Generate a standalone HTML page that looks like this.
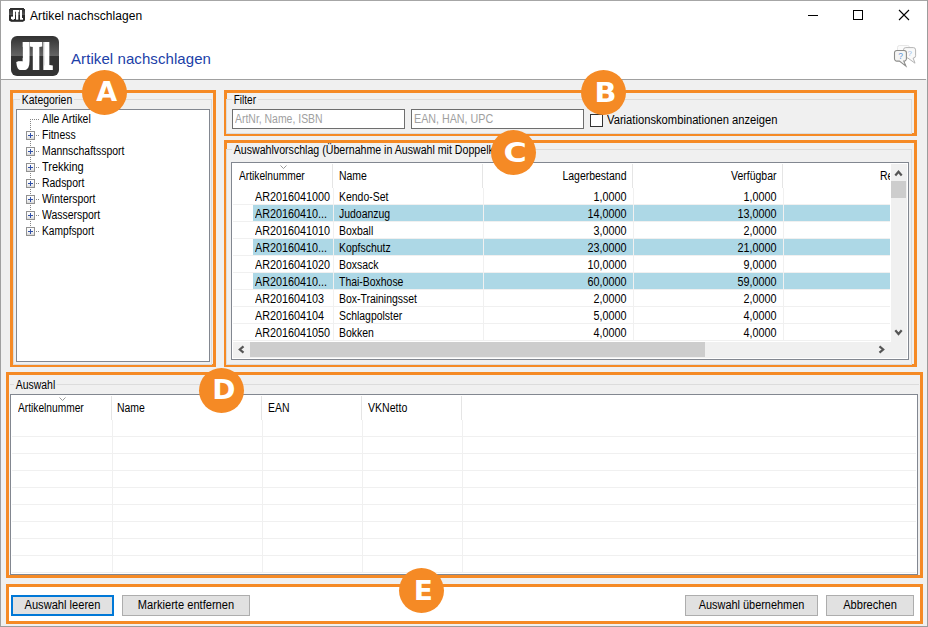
<!DOCTYPE html>
<html><head><meta charset="utf-8"><title>Artikel nachschlagen</title>
<style>
html,body{margin:0;padding:0;}
body{width:928px;height:627px;overflow:hidden;background:#f0f0f0;font-family:"Liberation Sans",sans-serif;font-size:11px;color:#000;}
#win{position:relative;width:928px;height:627px;overflow:hidden;background:#f0f0f0;}
.abs{position:absolute;}
.t{position:absolute;white-space:nowrap;font-size:12px;line-height:14px;transform:scaleX(.87);transform-origin:0 0;}
.ob{position:absolute;border:3px solid #f58a25;box-sizing:border-box;}
.circ{position:absolute;width:45px;height:45px;border-radius:50%;background:#f58a25;color:#fff;font-weight:bold;font-size:27px;line-height:46px;text-align:center;font-family:"DejaVu Sans","Liberation Sans",sans-serif;}
.cg{display:inline-block;}
.logo{position:absolute;width:48px;height:40px;transform-origin:0 0;will-change:transform;}
.logo .bg{position:absolute;left:0;top:0;width:48px;height:40px;border-radius:6px;background:linear-gradient(to bottom,#323232 0%,#3c3c3c 10%,#646464 49%,#333 51%,#333 100%);}
.jl{position:absolute;top:-3px;font-family:"Liberation Sans",sans-serif;font-weight:bold;font-size:41px;line-height:46px;color:#fff;transform-origin:0 0;white-space:nowrap;}
.jJ{left:6.76px;transform:scaleX(.474);text-shadow:2.16px 0 #fff,-2.16px 0 #fff,4.32px 0 #fff,-4.32px 0 #fff;clip-path:polygon(9.8px 0,60px 0,60px 46px,-20px 46px,-20px 25px,9.8px 25px);}
.jT{left:21.44px;transform:scaleX(.324);text-shadow:3.53px 0 #fff,-3.53px 0 #fff,7.07px 0 #fff,-7.07px 0 #fff;}
.jL{left:33.63px;transform:scaleX(.232);text-shadow:4.68px 0 #fff,-4.68px 0 #fff,9.35px 0 #fff,-9.35px 0 #fff;}
.gb{position:absolute;border:1px solid #dcdcdc;box-sizing:border-box;}
.gl{position:absolute;background:#f0f0f0;padding:0 2px;white-space:nowrap;font-size:12px;line-height:14px;transform:scaleX(.87);transform-origin:0 0;}
.lv{position:absolute;background:#fff;border:1px solid #828790;box-sizing:border-box;overflow:hidden;}
.btn{position:absolute;box-sizing:border-box;background:#e1e1e1;border:1px solid #adadad;white-space:nowrap;}
.bt{position:absolute;left:0;right:0;top:2px;text-align:center;font-size:12px;line-height:14px;transform:scaleX(.925);white-space:nowrap;}
.inp{position:absolute;box-sizing:border-box;background:#fff;border:1px solid #6e6e6e;}
.ph{color:#a0a0a0;}
.hl{position:absolute;background:#add8e6;height:16px;}
.rl{position:absolute;background:#f0f0f0;height:1px;}
.cl{position:absolute;background:#f0f0f0;width:1px;}
.hs{position:absolute;background:#e5e5e5;width:1px;}
.num{text-align:right;transform:scaleX(.9);transform-origin:100% 0;}
.numl{transform:scaleX(.9);}
</style></head><body>
<div id="win">
<!-- title + header -->
<div class="abs" style="left:0;top:0;width:928px;height:79px;background:#fff;"></div>
<div class="abs" style="left:0;top:79px;width:926px;height:1px;background:#a0a0a0;"></div>
<!-- small icon -->
<div class="logo" style="left:9px;top:8.2px;transform:scale(.3333,.34);"><div class="bg" style="background:linear-gradient(to bottom,#2a2a2a 0%,#333 10%,#555 49%,#2a2a2a 51%,#2a2a2a 100%);border-radius:7px;"></div><div class="jl jJ">J</div><div class="jl jT">T</div><div class="jl jL">L</div></div>
<div class="t" style="left:30px;top:9px;font-size:12px;line-height:15px;letter-spacing:0.08px;transform:none;">Artikel nachschlagen</div>
<!-- window controls -->
<svg class="abs" style="left:800px;top:0" width="128" height="31" viewBox="0 0 128 31">
<path d="M8 15.5H18" stroke="#000" stroke-width="1" fill="none"/>
<rect x="53.5" y="10.5" width="9" height="9" stroke="#000" stroke-width="1" fill="none"/>
<path d="M99 10L109 20M109 10L99 20" stroke="#000" stroke-width="1.1" fill="none"/>
</svg>
<!-- big icon -->
<div class="logo" style="left:11px;top:36px;"><div class="bg"></div><div class="jl jJ">J</div><div class="jl jT">T</div><div class="jl jL">L</div></div>
<div class="t" style="left:71px;top:50px;font-size:15px;line-height:18px;color:#2040a8;letter-spacing:0.08px;transform:none;">Artikel nachschlagen</div>
<!-- help icon -->
<svg class="abs" style="left:888px;top:40px" width="36" height="32" viewBox="0 0 36 32">
<rect x="9.500" y="5.500" width="12" height="9" rx="2" fill="#fbfbfb" stroke="#e0e0e0" stroke-width="0.800"/>
<path d="M17.800 7.600h7.500a2.300 2.300 0 0 1 2.300 2.300v5.800a2.300 2.300 0 0 1-2.300 2.300h-0.200l1.900 5.200l-7.200-5.200h-2a2.300 2.300 0 0 1-2.300-2.300v-5.800a2.300 2.300 0 0 1 2.300-2.300z" fill="#f9f9f9" stroke="#b4b4b4" stroke-width="1"/>
<text x="21.700" y="16" font-size="8" fill="#9dbde8" text-anchor="middle" font-family="Liberation Sans, sans-serif">?</text>
<path d="M8.800 10.500h7.300a2.300 2.300 0 0 1 2.300 2.300v6a2.300 2.300 0 0 1-2.300 2.300h-0.300l2.100 5l-6.500-5h-2.600a2.300 2.300 0 0 1-2.300-2.300v-6a2.300 2.300 0 0 1 2.300-2.300z" fill="#f5f5f4" stroke="#8c8c8a" stroke-width="1.100"/>
<text x="12.500" y="19.300" font-size="8.500" fill="#5f93d8" text-anchor="middle" font-family="Liberation Sans, sans-serif">?</text>
</svg>

<!-- A: Kategorien -->
<div class="ob" style="left:10px;top:90px;width:206px;height:277px;"></div>
<div class="gb" style="left:13px;top:99px;width:199px;height:266px;"></div>
<div class="gl" style="left:20px;top:93px;">Kategorien</div>
<div class="lv" style="left:16px;top:109px;width:194px;height:253px;"></div>
<svg class="abs" style="left:16px;top:109px" width="194" height="140" viewBox="0 0 194 140" shape-rendering="crispEdges">
<g stroke="#858585" stroke-width="1" stroke-dasharray="1 1" fill="none">
<path d="M14.500 10V122"/>
<path d="M14 10.500H23"/>
<path d="M20 26.500H23M20 42.500H23M20 58.500H23M20 74.500H23M20 90.500H23M20 106.500H23M20 122.500H23"/>
</g>
<defs><linearGradient id="pbg" x1="0" y1="0" x2="0" y2="1"><stop offset="0" stop-color="#fff"/><stop offset="0.550" stop-color="#f4f4f4"/><stop offset="1" stop-color="#d4d4d4"/></linearGradient></defs>
<g id="pb">
<rect x="10.5" y="22.5" width="8" height="8" rx="1" fill="url(#pbg)" stroke="#919191" stroke-width="1"/><path d="M12 26.5H17M14.5 24V29" stroke="#3050a8" stroke-width="1" fill="none"/>
<rect x="10.5" y="38.5" width="8" height="8" rx="1" fill="url(#pbg)" stroke="#919191" stroke-width="1"/><path d="M12 42.5H17M14.5 40V45" stroke="#3050a8" stroke-width="1" fill="none"/>
<rect x="10.5" y="54.5" width="8" height="8" rx="1" fill="url(#pbg)" stroke="#919191" stroke-width="1"/><path d="M12 58.5H17M14.5 56V61" stroke="#3050a8" stroke-width="1" fill="none"/>
<rect x="10.5" y="70.5" width="8" height="8" rx="1" fill="url(#pbg)" stroke="#919191" stroke-width="1"/><path d="M12 74.5H17M14.5 72V77" stroke="#3050a8" stroke-width="1" fill="none"/>
<rect x="10.5" y="86.5" width="8" height="8" rx="1" fill="url(#pbg)" stroke="#919191" stroke-width="1"/><path d="M12 90.5H17M14.5 88V93" stroke="#3050a8" stroke-width="1" fill="none"/>
<rect x="10.5" y="102.5" width="8" height="8" rx="1" fill="url(#pbg)" stroke="#919191" stroke-width="1"/><path d="M12 106.5H17M14.5 104V109" stroke="#3050a8" stroke-width="1" fill="none"/>
<rect x="10.5" y="118.5" width="8" height="8" rx="1" fill="url(#pbg)" stroke="#919191" stroke-width="1"/><path d="M12 122.5H17M14.5 120V125" stroke="#3050a8" stroke-width="1" fill="none"/>
</g>
</svg>
<div class="t" style="left:42px;top:112px;">Alle Artikel</div>
<div class="t" style="left:42px;top:128px;">Fitness</div>
<div class="t" style="left:42px;top:144px;">Mannschaftssport</div>
<div class="t" style="left:42px;top:160px;transform:scaleX(.915);">Trekking</div>
<div class="t" style="left:42px;top:176px;">Radsport</div>
<div class="t" style="left:42px;top:192px;">Wintersport</div>
<div class="t" style="left:42px;top:208px;">Wassersport</div>
<div class="t" style="left:42px;top:224px;transform:scaleX(.85);">Kampfsport</div>

<!-- B: Filter -->
<div class="ob" style="left:224px;top:90px;width:693px;height:46px;"></div>
<div class="gb" style="left:226px;top:99px;width:686px;height:35px;"></div>
<div class="gl" style="left:231.500px;top:93px;transform:scaleX(.84);">Filter</div>
<div class="inp" style="left:232px;top:109px;width:173px;height:20px;"></div>
<div class="t ph" style="left:235px;top:112px;">ArtNr, Name, ISBN</div>
<div class="inp" style="left:411px;top:109px;width:173px;height:20px;"></div>
<div class="t ph" style="left:414px;top:112px;transform:scaleX(.893);">EAN, HAN, UPC</div>
<div class="abs" style="left:590px;top:114px;width:13px;height:13px;box-sizing:border-box;border:1px solid #333;background:#fff;"></div>
<div class="t" style="left:607px;top:113px;transform:scaleX(.934);">Variationskombinationen anzeigen</div>

<!-- C: Auswahlvorschlag -->
<div class="ob" style="left:224px;top:140px;width:693px;height:227px;"></div>
<div class="gb" style="left:226px;top:149px;width:686px;height:216px;"></div>
<div class="gl" style="left:232px;top:143px;transform:scaleX(.884);">Auswahlvorschlag (Übernahme in Auswahl mit Doppelklick)</div>
<div class="lv" id="lvc" style="left:231px;top:162px;width:678px;height:198px;">
<div class="t" style="left:7px;top:6px;transform:scaleX(.85);">Artikelnummer</div>
<div class="t" style="left:107px;top:6px;">Name</div>
<div class="t num" style="left:251px;width:143.5px;top:6px;transform:scaleX(.873);">Lagerbestand</div>
<div class="t num" style="left:401px;width:143.5px;top:6px;transform:scaleX(.873);">Verfügbar</div>
<div class="abs" style="left:648px;top:6px;width:10px;height:14px;overflow:hidden;"><div class="t" style="left:0;top:0;">Reserviert</div></div>
<svg class="abs" style="left:48px;top:2px" width="7" height="5" viewBox="0 0 7 5"><path d="M0.500 0.500L3.500 3.500L6.500 0.500" stroke="#999" stroke-width="1" fill="none"/></svg>
<div class="hs" style="left:100px;top:1px;height:24px;"></div>
<div class="hs" style="left:250px;top:1px;height:24px;"></div>
<div class="hs" style="left:400px;top:1px;height:24px;"></div>
<div class="hs" style="left:550px;top:1px;height:24px;"></div>
<div class="rl" style="left:1px;top:41px;width:657px;"></div>
<div class="hl" style="left:21px;top:42px;width:637px;height:17px;"></div>
<div class="rl" style="left:1px;top:58px;width:657px;"></div>
<div class="rl" style="left:1px;top:75px;width:657px;"></div>
<div class="hl" style="left:21px;top:76px;width:637px;height:17px;"></div>
<div class="rl" style="left:1px;top:92px;width:657px;"></div>
<div class="rl" style="left:1px;top:109px;width:657px;"></div>
<div class="hl" style="left:21px;top:110px;width:637px;height:17px;"></div>
<div class="rl" style="left:1px;top:126px;width:657px;"></div>
<div class="rl" style="left:1px;top:143px;width:657px;"></div>
<div class="rl" style="left:1px;top:160px;width:657px;"></div>
<div class="rl" style="left:1px;top:177px;width:657px;"></div>
<div class="cl" style="left:101px;top:25px;height:153px;"></div>
<div class="cl" style="left:251px;top:25px;height:153px;"></div>
<div class="cl" style="left:401px;top:25px;height:153px;"></div>
<div class="cl" style="left:551px;top:25px;height:153px;"></div>
<div class="t numl" style="left:23px;top:27px;">AR2016041000</div>
<div class="t" style="left:107px;top:27px;">Kendo-Set</div>
<div class="t num" style="left:251px;width:143.5px;top:27px;">1,0000</div>
<div class="t num" style="left:401px;width:143.5px;top:27px;">1,0000</div>
<div class="t numl" style="left:23px;top:44px;">AR20160410...</div>
<div class="t" style="left:107px;top:44px;">Judoanzug</div>
<div class="t num" style="left:251px;width:143.5px;top:44px;">14,0000</div>
<div class="t num" style="left:401px;width:143.5px;top:44px;">13,0000</div>
<div class="t numl" style="left:23px;top:61px;">AR2016041010</div>
<div class="t" style="left:107px;top:61px;">Boxball</div>
<div class="t num" style="left:251px;width:143.5px;top:61px;">3,0000</div>
<div class="t num" style="left:401px;width:143.5px;top:61px;">2,0000</div>
<div class="t numl" style="left:23px;top:78px;">AR20160410...</div>
<div class="t" style="left:107px;top:78px;">Kopfschutz</div>
<div class="t num" style="left:251px;width:143.5px;top:78px;">23,0000</div>
<div class="t num" style="left:401px;width:143.5px;top:78px;">21,0000</div>
<div class="t numl" style="left:23px;top:95px;">AR2016041020</div>
<div class="t" style="left:107px;top:95px;">Boxsack</div>
<div class="t num" style="left:251px;width:143.5px;top:95px;">10,0000</div>
<div class="t num" style="left:401px;width:143.5px;top:95px;">9,0000</div>
<div class="t numl" style="left:23px;top:112px;">AR20160410...</div>
<div class="t" style="left:107px;top:112px;">Thai-Boxhose</div>
<div class="t num" style="left:251px;width:143.5px;top:112px;">60,0000</div>
<div class="t num" style="left:401px;width:143.5px;top:112px;">59,0000</div>
<div class="t numl" style="left:23px;top:129px;">AR201604103</div>
<div class="t" style="left:107px;top:129px;">Box-Trainingsset</div>
<div class="t num" style="left:251px;width:143.5px;top:129px;">2,0000</div>
<div class="t num" style="left:401px;width:143.5px;top:129px;">2,0000</div>
<div class="t numl" style="left:23px;top:146px;">AR201604104</div>
<div class="t" style="left:107px;top:146px;">Schlagpolster</div>
<div class="t num" style="left:251px;width:143.5px;top:146px;">5,0000</div>
<div class="t num" style="left:401px;width:143.5px;top:146px;">4,0000</div>
<div class="t numl" style="left:23px;top:163px;">AR2016041050</div>
<div class="t" style="left:107px;top:163px;">Bokken</div>
<div class="t num" style="left:251px;width:143.5px;top:163px;">4,0000</div>
<div class="t num" style="left:401px;width:143.5px;top:163px;">4,0000</div>
<div class="abs" style="left:658px;top:0;width:18px;height:1px;background:#fff;"></div>
<div class="abs" style="left:658px;top:1px;width:1px;height:177px;background:#fff;"></div>
<div class="abs" style="left:659px;top:1px;width:16px;height:194px;background:#f0f0f0;"></div>
<div class="abs" style="left:0;top:178px;width:659px;height:1px;background:#fff;"></div>
<div class="abs" style="left:1px;top:179px;width:674px;height:16px;background:#f0f0f0;"></div>
<div class="abs" style="left:0;top:179px;width:1px;height:17px;background:#fff;"></div>
<div class="abs" style="left:659px;top:18px;width:15px;height:17px;background:#cdcdcd;"></div>
<div class="abs" style="left:18px;top:179px;width:455px;height:15px;background:#cdcdcd;"></div>
<svg class="abs" style="left:0;top:0" width="675" height="195" viewBox="0 0 675 195"><path d="M663.3 12.5L666.5 8.8L669.7 12.5" stroke="#555" stroke-width="2.2" fill="none"/><path d="M663.3 167.3L666.5 171.0L669.7 167.3" stroke="#555" stroke-width="2.2" fill="none"/><path d="M11.5 183.3L7.8 186.5L11.5 189.7" stroke="#555" stroke-width="2.2" fill="none"/><path d="M647.5 183.3L651.2 186.5L647.5 189.7" stroke="#555" stroke-width="2.2" fill="none"/></svg>
</div>

<!-- D: Auswahl -->
<div class="ob" style="left:6px;top:372px;width:917px;height:206px;"></div>
<div class="gb" style="left:10px;top:384px;width:909px;height:191px;border-left:none;border-right:none;border-bottom:none"></div>
<div class="gl" style="left:14px;top:378px;">Auswahl</div>
<div class="lv" id="lvd" style="left:10px;top:394px;width:908px;height:181px;">
<div class="t" style="left:7px;top:6px;transform:scaleX(0.85);">Artikelnummer</div>
<div class="t" style="left:106px;top:6px;transform:scaleX(0.87);">Name</div>
<div class="t" style="left:256.5px;top:6px;transform:scaleX(0.87);">EAN</div>
<div class="t" style="left:357px;top:6px;transform:scaleX(0.88);">VKNetto</div>
<svg class="abs" style="left:48px;top:2px" width="7" height="5" viewBox="0 0 7 5"><path d="M0.500 0.500L3.500 3.500L6.500 0.500" stroke="#999" stroke-width="1" fill="none"/></svg>
<div class="hs" style="left:100px;top:1px;height:24px;"></div>
<div class="cl" style="left:101px;top:25px;height:153px;"></div>
<div class="hs" style="left:250px;top:1px;height:24px;"></div>
<div class="cl" style="left:251px;top:25px;height:153px;"></div>
<div class="hs" style="left:350px;top:1px;height:24px;"></div>
<div class="cl" style="left:351px;top:25px;height:153px;"></div>
<div class="hs" style="left:450px;top:1px;height:24px;"></div>
<div class="cl" style="left:451px;top:25px;height:153px;"></div>
<div class="rl" style="left:1px;top:41px;width:904px;"></div>
<div class="rl" style="left:1px;top:58px;width:904px;"></div>
<div class="rl" style="left:1px;top:75px;width:904px;"></div>
<div class="rl" style="left:1px;top:92px;width:904px;"></div>
<div class="rl" style="left:1px;top:109px;width:904px;"></div>
<div class="rl" style="left:1px;top:126px;width:904px;"></div>
<div class="rl" style="left:1px;top:143px;width:904px;"></div>
<div class="rl" style="left:1px;top:160px;width:904px;"></div>
<div class="rl" style="left:1px;top:177px;width:904px;"></div>
</div>

<!-- E: buttons -->
<div class="ob" style="left:6px;top:584px;width:917px;height:40px;background:#fff;"></div>
<div class="btn" style="left:11px;top:595px;width:103px;height:21px;border:2px solid #0078d7;"><span class="bt" style="top:1px">Auswahl leeren</span></div>
<div class="btn" style="left:122px;top:595px;width:128px;height:21px;"><span class="bt">Markierte entfernen</span></div>
<div class="btn" style="left:685px;top:595px;width:133px;height:21px;"><span class="bt" style="transform:scaleX(.91);">Auswahl übernehmen</span></div>
<div class="btn" style="left:826px;top:595px;width:88px;height:21px;"><span class="bt">Abbrechen</span></div>

<!-- circles -->
<div class="circ" style="left:82px;top:70px;"><span class="cg" style="transform:translate(2.2px,-1px) scaleX(1.0);">A</span></div>
<div class="circ" style="left:581px;top:70px;"><span class="cg" style="transform:translate(2.25px,0) scaleX(1.067);">B</span></div>
<div class="circ" style="left:491px;top:130px;"><span class="cg" style="transform:translate(1.3px,0) scaleX(1.175);">C</span></div>
<div class="circ" style="left:199px;top:368px;"><span class="cg" style="transform:translate(2.7px,-1px) scaleX(1.036);">D</span></div>
<div class="circ" style="left:399px;top:568px;"><span class="cg" style="transform:translate(2.05px,0) scaleX(1.04);">E</span></div>

<!-- window borders -->
<div class="abs" style="left:0;top:0;width:928px;height:1px;background:#a6a6a6;"></div>
<div class="abs" style="left:0;top:0;width:1px;height:627px;background:#a0a0a0;"></div>
<div class="abs" style="left:927px;top:0;width:1px;height:627px;background:#9c9c9c;"></div>
<div class="abs" style="left:0;top:626px;width:928px;height:1px;background:#9c9c9c;"></div>
</div>
</body></html>
